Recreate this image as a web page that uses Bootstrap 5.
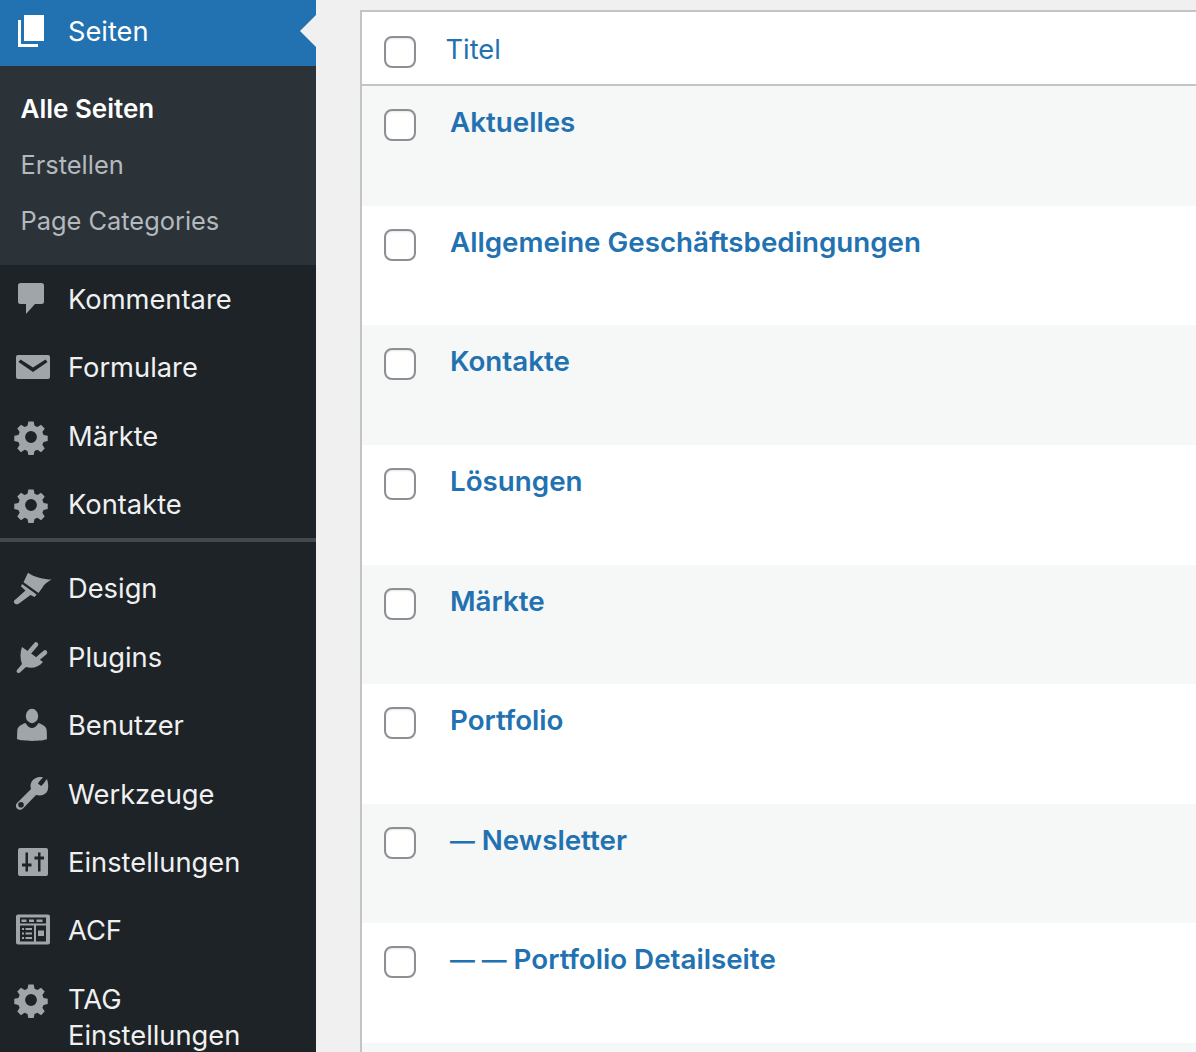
<!DOCTYPE html>
<html lang="de">
<head>
<meta charset="utf-8">
<title>Seiten</title>
<link rel="stylesheet" href="https://cdn.jsdelivr.net/npm/bootstrap@5.3.0/dist/css/bootstrap.min.css">
<style>
html,body{height:100%;overflow:hidden}
body{background:#f0f0f1;font-family:Inter,"Liberation Sans",sans-serif;width:1196px;height:1052px}
.wp-shell{height:1052px;overflow:hidden}
.wp-side{width:316px;background:#1d2327;flex:none;height:1052px;overflow:hidden}
.wp-current{height:66px;background:#2271b1;color:#fff;position:relative;padding-left:68px;font-size:27.25px;line-height:32px;padding-top:16px}
.wp-current::after{content:"";position:absolute;right:0;top:15px;border:16px solid transparent;border-right-color:#f0f0f1;border-left:0}
.wp-ico{position:absolute;left:12px;width:40px;height:40px;fill:#a0a5aa}
.wp-current .wp-ico{fill:#fff;top:11px}
.wp-sub{background:#2c3338;height:199px;padding-top:15px;font-size:25.4px}
.wp-sub div{height:56px;line-height:56px;padding-left:20.500px;color:#b4b9be;white-space:nowrap}
.wp-sub .is-on{color:#fff;font-weight:600;font-size:26px}
.wp-item{position:relative;height:68.4px;padding-left:68px;padding-top:1.3px;color:#f0f0f1;font-size:27.3px;line-height:36px;display:flex;align-items:center}
.wp-item .wp-ico{top:14px}
.wp-tall{height:auto;padding-top:17px;display:block}
.wp-gap{height:4px;background:#43494d}
.wp-gapwrap{height:16px;display:flow-root}
.wp-gapwrap .wp-gap{margin-top:-.6px}
.wp-main{flex:1;padding:10px 0 0 44px;min-width:0}
.wp-table{border-top:2px solid #c3c4c7;border-left:2px solid #c3c4c7;background:#fff}
.wp-head{height:74px;border-bottom:2px solid #c3c4c7;background:#fff;padding-left:22px;display:flex;align-items:center}
.wp-head a{color:#2271b1;text-decoration:none;font-size:27.25px;line-height:34px;margin-left:29.500px;margin-top:3px}
.wp-row{height:119.65px;padding:18px 0 0 22px;display:flex;align-items:flex-start}
.wp-row:nth-child(odd){background:#f6f7f7}
.wp-row a{color:#2271b1;font-weight:600;text-decoration:none;font-size:27.75px;line-height:36px;margin-left:34px;white-space:nowrap}
.wp-dash{font-size:24.800px}
.wp-box{width:32px;height:32px;border:2px solid #8c8f94;border-radius:8px;background:#fff;box-shadow:inset 0 1px 2px rgba(0,0,0,.1);flex:none;margin-top:5px}
.wp-head .wp-box{margin-top:8px}
.wp-prong{stroke:#a0a5aa;stroke-width:4.5;stroke-linecap:round;fill:none}
.wp-cut{fill:#1d2327}
</style>
</head>
<body>
<div class="wp-shell d-flex">
<nav class="wp-side">
  <div class="wp-current">
    <svg class="wp-ico" viewBox="0 0 40 40"><path d="M12 4H32V30H12z"/><path d="M6 9H9V33H26V36H6z"/></svg>
    Seiten
  </div>
  <div class="wp-sub">
    <div class="is-on">Alle Seiten</div>
    <div>Erstellen</div>
    <div>Page Categories</div>
  </div>
  <div class="wp-item"><svg class="wp-ico" viewBox="0 0 40 40"><path d="M8.500 4h21a2.500 2.500 0 0 1 2.500 2.500v16a2.500 2.500 0 0 1-2.500 2.500H23l-9 10V25H8.500A2.500 2.500 0 0 1 6 22.500v-16A2.500 2.500 0 0 1 8.500 4z"/></svg>Kommentare</div>
  <div class="wp-item"><svg class="wp-ico" viewBox="0 0 40 40"><path fill-rule="evenodd" d="M6 6h30a2 2 0 0 1 2 2v20a2 2 0 0 1-2 2H6a2 2 0 0 1-2-2V8a2 2 0 0 1 2-2zm2.500 4.500-2 2.500L21 23l14.500-10-2-2.500L21 18.500z" transform="translate(0 2)"/></svg>Formulare</div>
  <div class="wp-item"><svg class="wp-ico" viewBox="0 0 40 40"><use href="#wp-gear"/></svg>Märkte</div>
  <div class="wp-item"><svg class="wp-ico" viewBox="0 0 40 40"><use href="#wp-gear"/></svg>Kontakte</div>
  <div class="wp-gapwrap"><div class="wp-gap"></div></div>
  <div class="wp-item"><svg class="wp-ico" viewBox="0 0 40 40"><path d="M16 3.700C22 8 32 10.500 39.500 10.500 35 13 31.500 16 30.500 18.500L26.500 24 11.500 13.200z"/><path d="M10 15 24.700 25.500 22.500 28 18.500 26 7 34.500C5.500 36 3 35.500 2 33.500 1.500 32 2.500 31 4 30L13.500 21.500 9 17.500z"/></svg>Design</div>
  <div class="wp-item"><svg class="wp-ico" viewBox="0 0 40 40"><path class="wp-prong" d="M17.500 15 24 7.500M26.500 21 33 15.500"/><path d="M10 10 31 25c-4 5-11 7-17 5l-6 5.500c-2 1.500-4.500-.500-3-2.500l5-6c-2-5-2-12 0-17z"/></svg>Plugins</div>
  <div class="wp-item"><svg class="wp-ico" viewBox="0 0 40 40"><ellipse cx="20" cy="11" rx="6.200" ry="7.200"/><path d="M13.500 18c1.500 3 4.500 5 6.500 5s5-2 6.500-5c4 1.300 8 3.500 8.200 7.500.1 2.500.3 5.500.3 8.500-4 2.500-26 2.500-30 0 0-3 .2-6 .3-8.500.2-4 4.200-6.200 8.200-7.500z"/></svg>Benutzer</div>
  <div class="wp-item"><svg class="wp-ico" viewBox="0 0 40 40"><path fill-rule="evenodd" d="M35 5c-2 2-4 6-6 7l-3-2.500c1-2 3-4 5-6-4-1.500-9 .5-11 3.500-1.500 2.500-2 5-1 8L5 29c-1.500 1.500-1.500 4 0 5.500s4 2 6 0L24 21c4 1 7 .5 10-2 2.500-2.500 3-7 1-14zM9 28a2.800 2.800 0 1 1 0 5.600A2.800 2.800 0 0 1 9 28z"/></svg>Werkzeuge</div>
  <div class="wp-item"><svg class="wp-ico" viewBox="0 0 40 40"><rect x="6" y="6" width="30" height="28" rx="2"/><path class="wp-cut" d="M13.500 10.500H16v11h3.500v3H16v5h-2.500v-5H10v-3h3.500zM26 10.500h2.500v4H32v3h-3.500v12H26v-12h-3.500v-3H26z"/></svg>Einstellungen</div>
  <div class="wp-item"><svg class="wp-ico" viewBox="0 0 40 40"><path fill-rule="evenodd" d="M6 3h30a2 2 0 0 1 2 2v26a2 2 0 0 1-2 2H6a2 2 0 0 1-2-2V5a2 2 0 0 1 2-2zm2 3v6h26V6zm1.500 2h5v2.500h-5zm7.500 0h5v2.500h-5zm7.500 0h6v2.500h-6zM8 14v16h14V14zm16 0v16h10V14zm-14 2.500h2v2h-2zm3.500 0H20v2h-6.500zm-3.500 4.500h2v2h-2zm3.500 0H20v2h-6.500zm-3.500 4.500h2v2h-2zm3.500 0H20v2h-6.500zm12.500-6.500h6v5.500h-6z" transform="translate(0 .5)"/></svg>ACF</div>
  <div class="wp-item wp-tall"><svg class="wp-ico" viewBox="0 0 40 40"><use href="#wp-gear"/></svg>TAG<br>Einstellungen</div>
</nav>
<main class="wp-main">
  <div class="wp-table">
    <div class="wp-head"><span class="wp-box"></span><a href="#">Titel</a></div>
    <div>
      <div class="wp-row"><span class="wp-box"></span><a href="#">Aktuelles</a></div>
      <div class="wp-row"><span class="wp-box"></span><a href="#">Allgemeine Geschäftsbedingungen</a></div>
      <div class="wp-row"><span class="wp-box"></span><a href="#">Kontakte</a></div>
      <div class="wp-row"><span class="wp-box"></span><a href="#">Lösungen</a></div>
      <div class="wp-row"><span class="wp-box"></span><a href="#">Märkte</a></div>
      <div class="wp-row"><span class="wp-box"></span><a href="#">Portfolio</a></div>
      <div class="wp-row"><span class="wp-box"></span><a href="#"><span class="wp-dash">—</span> Newsletter</a></div>
      <div class="wp-row"><span class="wp-box"></span><a href="#"><span class="wp-dash">—</span> <span class="wp-dash">—</span> Portfolio Detailseite</a></div>
      <div class="wp-row"><span class="wp-box"></span></div>
    </div>
  </div>
</main>
</div>
<svg width="0" height="0" class="position-absolute"><defs>
<path id="wp-gear" fill-rule="evenodd" d="M17 2.500h6l1 4.800 3.300 1.400 4.100-2.700 4.200 4.200-2.700 4.100 1.400 3.300 4.700 1v6l-4.700 1-1.400 3.300 2.700 4.100-4.200 4.200-4.100-2.700-3.300 1.400-1 4.600h-6l-1-4.600-3.300-1.400-4.100 2.700-4.200-4.200 2.700-4.100-1.400-3.300-4.700-1v-6l4.700-1 1.400-3.300-2.700-4.100 4.200-4.200 4.100 2.700 3.300-1.400zM20 13.300a6.700 6.700 0 1 0 0 13.400 6.700 6.700 0 0 0 0-13.400z" transform="translate(19 21) scale(.88) translate(-20 -20)"/>
</defs></svg>
<script src="https://cdn.jsdelivr.net/npm/bootstrap@5.3.0/dist/js/bootstrap.bundle.min.js"></script>
</body>
</html>
